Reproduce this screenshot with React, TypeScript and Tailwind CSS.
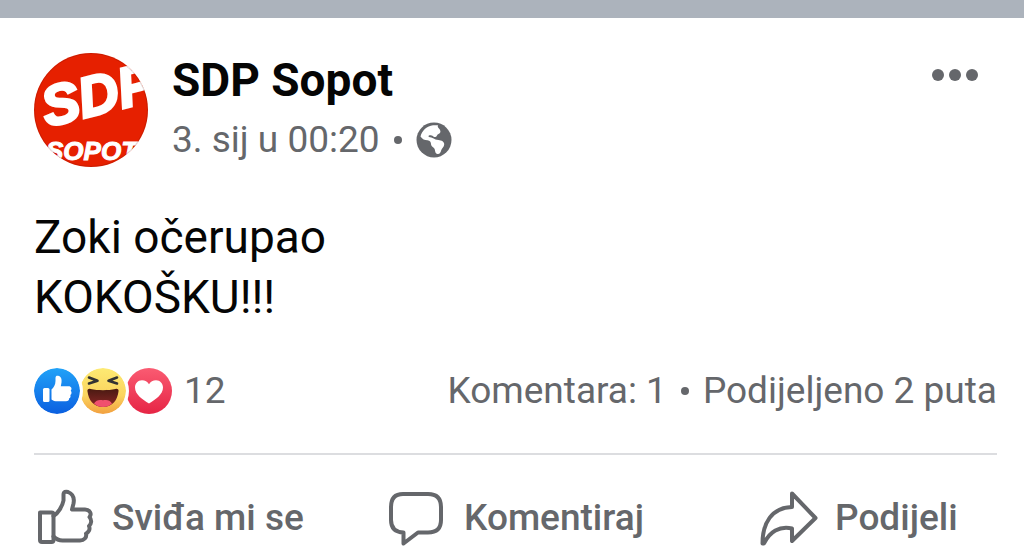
import type { ReactNode } from "react";

const post = {
  author: "SDP Sopot",
  time: "3. sij u 00:20",
  lines: ["Zoki očerupao", "KOKOŠKU!!!"],
  reactions: 12,
  comments: "Komentara: 1",
  shares: "Podijeljeno 2 puta",
};

function Avatar() {
  return (
    <svg viewBox="0 0 114 114" className="size-[114px] shrink-0" role="img" aria-label={post.author}>
      <defs>
        <clipPath id="avatar-clip">
          <circle cx="57" cy="57" r="57" />
        </clipPath>
      </defs>
      <g clipPath="url(#avatar-clip)">
        <rect width="114" height="114" fill="#e62000" />
        <g
          fill="#fff"
          fontFamily="'Liberation Sans', Arial, sans-serif"
          fontWeight="700"
          fontStyle="italic"
        >
          <text x="13" y="74" fontSize="56" stroke="#fff" strokeWidth="3" transform="rotate(-14 13 74)">
            SDP
          </text>
          <text x="12" y="107" fontSize="26" stroke="#fff" strokeWidth="1">
            SOPOT
          </text>
        </g>
      </g>
      <circle cx="57" cy="57" r="56.5" fill="none" stroke="#000" strokeOpacity="0.12" />
    </svg>
  );
}

function GlobeIcon() {
  return (
    <svg viewBox="0 0 36 36" className="size-9" aria-hidden="true">
      <circle cx="18" cy="18" r="17.5" fill="#65676b" />
      <path
        fill="#fff"
        d="M4.500 14.500C6 8.500 11 4 17 3.300L22 3.300C21 5 22.800 6 23.800 7.500C25 9.500 24.500 11.300 22.500 12C21 12.500 21 14.500 19.500 15C18 15.300 17 13.600 15.500 13.400C13.500 13.200 12.300 13.600 12.500 14.500C12.800 15.400 15 15.300 16.500 16C19 17 20 18 22.500 18.100C25.500 18.300 28.500 20 28.200 22.500C28 25 26 26 25.300 28C24.700 30 24 32.300 21.500 32C19 31.500 19.300 29 18.600 27C17.800 25 15 24.500 15 22C15 20 14 18.500 11.500 18.200C8.500 18 6.500 17.500 4.500 14.500Z"
      />
    </svg>
  );
}

function LikeReaction() {
  return (
    <svg viewBox="0 0 46 46" className="relative z-20 size-[46px] rounded-full bg-white ring-3 ring-white" aria-hidden="true">
      <defs>
        <linearGradient id="like-fill" x1="0" y1="0" x2="0" y2="1">
          <stop offset="0" stopColor="#21a2f8" />
          <stop offset="1" stopColor="#0b5fe0" />
        </linearGradient>
      </defs>
      <circle cx="23" cy="23" r="23" fill="url(#like-fill)" />
      <rect x="9" y="20" width="6.500" height="14" rx="1.500" fill="#fff" />
      <path
        fill="#fff"
        d="M17.500 21.500C19.500 19.500 21.500 17 21.500 13V10C21.500 8 22.800 7.500 24 7.800C27 8.500 28 11 27.500 14.500L26.800 18.300H34.500C37.500 18.300 38.300 21 36.700 22.700C38 24 37.800 26 36.300 27C37 28.500 36.300 30 35 30.500C35.300 32.300 34 33.300 32 33.300H23.500C21 33.300 19 32.800 17.500 31.500Z"
      />
    </svg>
  );
}

function HahaReaction() {
  return (
    <svg viewBox="0 0 46 46" className="relative z-10 size-[46px] rounded-full bg-white ring-3 ring-white" aria-hidden="true">
      <defs>
        <linearGradient id="haha-fill" x1="0" y1="0" x2="0" y2="1">
          <stop offset="0" stopColor="#fdea73" />
          <stop offset="0.6" stopColor="#fbd45e" />
          <stop offset="1" stopColor="#f2a040" />
        </linearGradient>
        <linearGradient id="haha-mouth" x1="0" y1="0" x2="0" y2="1">
          <stop offset="0" stopColor="#4a1a12" />
          <stop offset="1" stopColor="#8a2626" />
        </linearGradient>
      </defs>
      <circle cx="23" cy="23" r="23" fill="url(#haha-fill)" />
      <path d="M7.500 23.500C7 21.500 8.500 20.500 10.500 21C18 22.600 28 22.600 35.500 21C37.500 20.500 39 21.500 38.500 23.500C37.500 32 32.500 39 23 39S8.500 32 7.500 23.500Z" fill="url(#haha-mouth)" />
      <path d="M14 35.500C16 31.500 20 31.500 23 32.300C26 31.500 30 31.500 32 35.500C29.500 38 26.500 39 23 39S16.500 38 14 35.500Z" fill="#f0506e" />
      <path
        d="M9 9.500L17.500 12.800L9 15.500M37 9.500L28.500 12.800L37 15.500"
        fill="none"
        stroke="#333"
        strokeWidth="2.6"
        strokeLinecap="round"
        strokeLinejoin="round"
      />
    </svg>
  );
}

function LoveReaction() {
  return (
    <svg viewBox="0 0 46 46" className="size-[46px]" aria-hidden="true">
      <defs>
        <linearGradient id="love-fill" x1="0" y1="0" x2="0" y2="1">
          <stop offset="0" stopColor="#fa5b72" />
          <stop offset="1" stopColor="#e62545" />
        </linearGradient>
      </defs>
      <circle cx="23" cy="23" r="23" fill="url(#love-fill)" />
      <path
        fill="#fff"
        d="M23 16.300C24.500 13.500 27 12.200 30 12.200C34.200 12.200 37 15.500 37 19.500C37 26.500 29.500 31.500 23 35.500C16.500 31.500 9 26.500 9 19.500C9 15.500 11.800 12.200 16 12.200C19 12.200 21.500 13.500 23 16.300Z"
      />
    </svg>
  );
}

const outline = {
  fill: "none",
  stroke: "#65676b",
  strokeWidth: 4,
  strokeLinejoin: "round",
  strokeLinecap: "round",
} as const;

function ThumbIcon() {
  return (
    <svg viewBox="0 0 58 58" className="size-[58px] overflow-visible" aria-hidden="true" {...outline}>
      <path d="M6 23.500H17.500Q19.500 23.500 19.500 25.500V51Q19.500 53 17.500 53H8Q6 53 6 51Z" />
      <path d="M19.500 27C24 24.500 28.500 17 29.500 11.500V5.500C29.500 2.500 32 2.300 34 3C39 5 40.500 9.500 39.500 14.500L38 20.500H51C56 20.500 58 25 55.500 28C58 31 57.500 35 55 37C56.500 40.500 54.500 43.500 52 44.500C53 48.500 50 51.500 46 51.500H28.500C24.500 51.500 22 50 19.500 47.500" />
    </svg>
  );
}

function CommentIcon() {
  return (
    <svg viewBox="0 0 58 58" className="size-[58px] overflow-visible" aria-hidden="true" {...outline}>
      <path d="M17 5H42Q55 5 55 18V31Q55 43.500 42 43.500H32L17.500 54.500V43.500Q5 43 5 31V18Q5 5 17 5Z" />
    </svg>
  );
}

function ShareIcon() {
  return (
    <svg viewBox="0 0 58 58" className="size-[58px] overflow-visible" aria-hidden="true" {...outline}>
      <path d="M35 4.500L58.500 29L35 52V39.500C22.500 36.500 12.500 43 7 54.500H5.500C5.500 34.500 14.500 18.500 35 18Z" />
    </svg>
  );
}

function ActionButton({ icon, label }: { icon: ReactNode; label: string }) {
  return (
    <button type="button" className="flex items-center gap-5 text-[37px] leading-[58px] font-medium whitespace-nowrap">
      {icon}
      {label}
    </button>
  );
}

export default function App() {
  return (
    <main className="bg-white font-[Roboto,sans-serif] text-[#65676b]">
      <div className="h-[18px] bg-[#acb3bc]" />
      <article className="pt-[35px] pr-[27px] pl-[34px]">
        <header className="flex items-start">
          <Avatar />
          <div className="ml-6 flex-1">
            <h1 className="text-[46px] leading-[54px] font-bold text-[#050505]">{post.author}</h1>
            <p className="mt-2 flex items-center text-[37px] leading-[50px]">
              {post.time}
              <span className="mx-[14px] size-2 rounded-full bg-[#65676b]" />
              <GlobeIcon />
            </p>
          </div>
          <button type="button" aria-label="Više" className="mt-4 mr-[19px] flex gap-[5px]">
            <span className="size-3 rounded-full bg-[#65676b]" />
            <span className="size-3 rounded-full bg-[#65676b]" />
            <span className="size-3 rounded-full bg-[#65676b]" />
          </button>
        </header>

        <div className="mt-10 text-[46px] leading-[60px] text-[#050505]">
          {post.lines.map((line) => (
            <p key={line}>{line}</p>
          ))}
        </div>

        <div className="mt-10 flex items-center justify-between text-[37px] leading-[48px]">
          <div className="flex items-center">
            <LikeReaction />
            <HahaReaction />
            <LoveReaction />
            <span className="ml-3">{post.reactions}</span>
          </div>
          <div className="flex items-center">
            <span>{post.comments}</span>
            <span className="mx-[14px] size-2 rounded-full bg-[#65676b]" />
            <span>{post.shares}</span>
          </div>
        </div>

        <div className="mt-[38px] grid grid-cols-[352fr_371fr_240fr] border-t-2 border-[#dcdde0] pt-[34px]">
          <ActionButton icon={<ThumbIcon />} label="Sviđa mi se" />
          <ActionButton icon={<CommentIcon />} label="Komentiraj" />
          <ActionButton icon={<ShareIcon />} label="Podijeli" />
        </div>
      </article>
    </main>
  );
}
